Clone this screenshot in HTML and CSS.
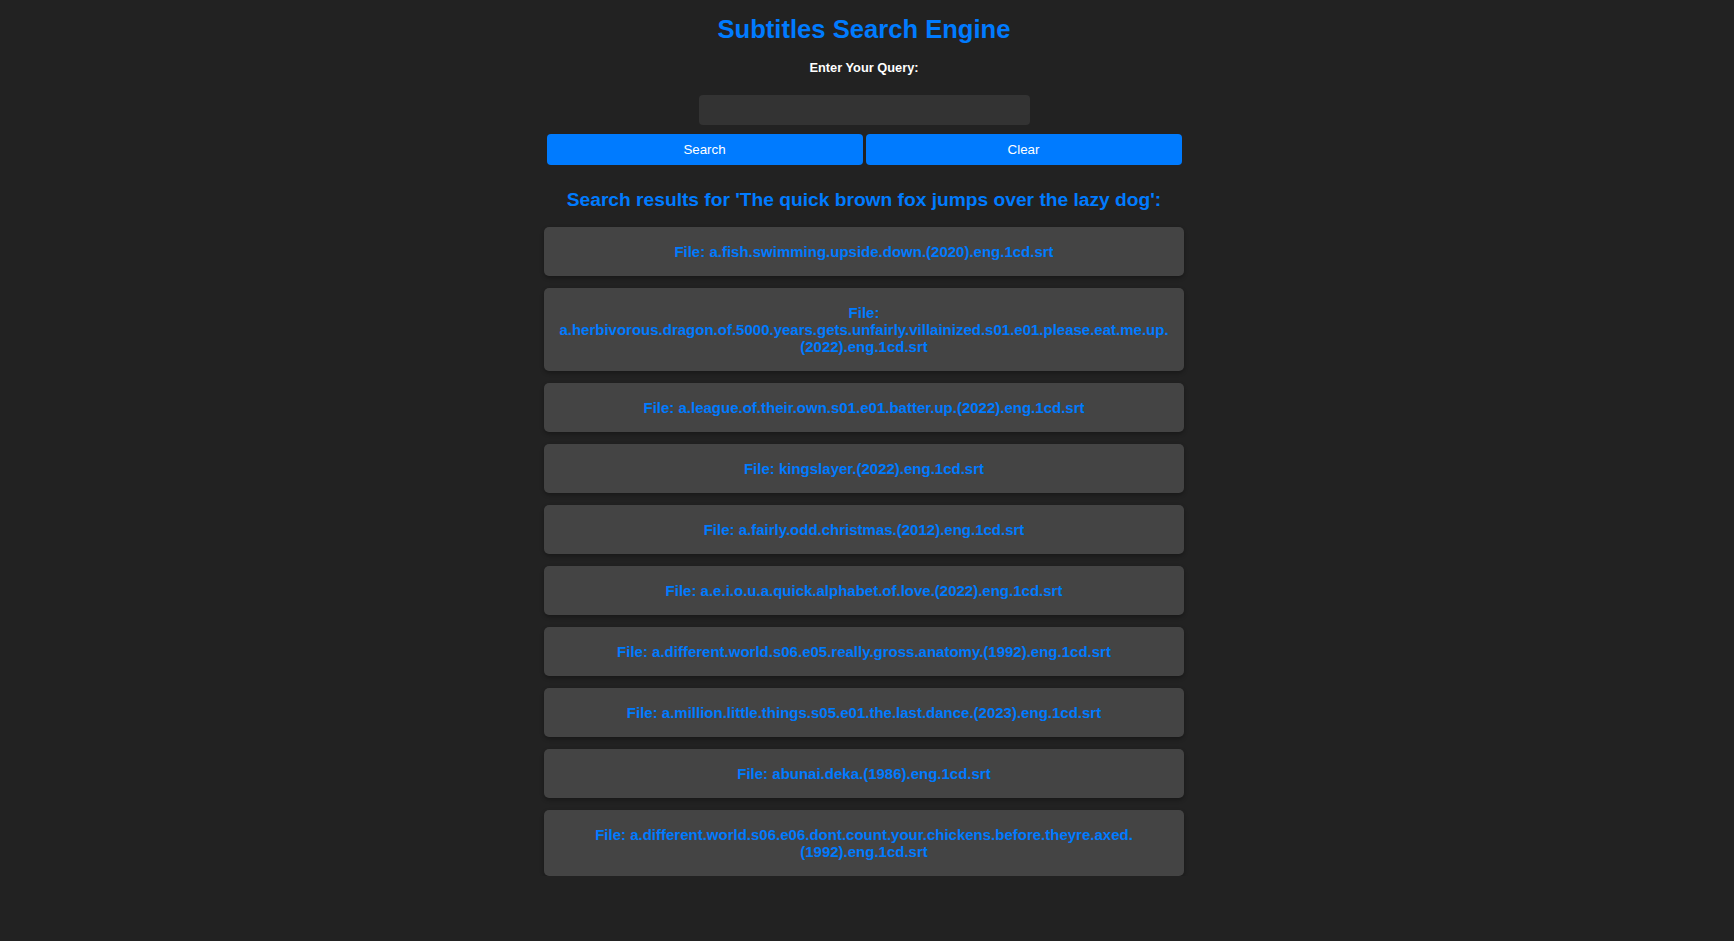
FILE: index.html
```html
<!DOCTYPE html>
<html lang="en">
<head>
<meta charset="utf-8">
<title>Subtitles Search Engine</title>
<link rel="stylesheet" href="styles.css">
</head>
<body>
<div class="app">
  <h1 class="title">Subtitles Search Engine</h1>
  <form class="search-form">
    <label class="query-label" for="query">Enter Your Query:</label>
    <input id="query" class="query-input" type="text">
    <div class="button-row">
      <button type="button" class="btn">Search</button>
      <button type="button" class="btn">Clear</button>
    </div>
  </form>
  <h2 class="results-title">Search results for 'The quick brown fox jumps over the lazy dog':</h2>
  <ul class="results">
    <li class="result">File: a.fish.swimming.upside.down.(2020).eng.1cd.srt</li>
    <li class="result">File: a.herbivorous.dragon.of.5000.years.gets.unfairly.villainized.s01.e01.please.eat.me.up.(2022).eng.1cd.srt</li>
    <li class="result">File: a.league.of.their.own.s01.e01.batter.up.(2022).eng.1cd.srt</li>
    <li class="result">File: kingslayer.(2022).eng.1cd.srt</li>
    <li class="result">File: a.fairly.odd.christmas.(2012).eng.1cd.srt</li>
    <li class="result">File: a.e.i.o.u.a.quick.alphabet.of.love.(2022).eng.1cd.srt</li>
    <li class="result">File: a.different.world.s06.e05.really.gross.anatomy.(1992).eng.1cd.srt</li>
    <li class="result">File: a.million.little.things.s05.e01.the.last.dance.(2023).eng.1cd.srt</li>
    <li class="result">File: abunai.deka.(1986).eng.1cd.srt</li>
    <li class="result">File: a.different.world.s06.e06.dont.count.your.chickens.before.theyre.axed.(1992).eng.1cd.srt</li>
  </ul>
</div>
</body>
</html>
```

FILE: styles.css
```css
html {
  background: #222222;
}

body {
  margin: 0;
  padding: 0 6px 0 0;
  background: #222222;
  font-family: "Liberation Sans", Arial, sans-serif;
}

.app {
  width: 640px;
  margin: 0 auto;
  display: flex;
  flex-direction: column;
  align-items: center;
}

.title {
  margin: 15px 0 0;
  font-size: 25.6px;
  line-height: normal;
  font-weight: bold;
  color: #007bff;
}

.search-form {
  width: 100%;
  display: flex;
  flex-direction: column;
  align-items: center;
}

.query-label {
  display: block;
  margin-top: 16px;
  font-size: 12.8px;
  font-weight: bold;
  color: #ffffff;
}

.query-input {
  box-sizing: border-box;
  margin-top: 20px;
  width: 331px;
  height: 30px;
  padding: 0 8px;
  border: none;
  border-radius: 4px;
  background: #333333;
  color: #ffffff;
  font-family: inherit;
  font-size: 14px;
  outline: none;
}

.button-row {
  margin-top: 9px;
  width: 635px;
  display: flex;
  gap: 3px;
}

.btn {
  flex: 1;
  height: 31px;
  padding: 0;
  border: none;
  border-radius: 4px;
  background: #007bff;
  color: #ffffff;
  font-family: inherit;
  font-size: 13.33px;
  cursor: pointer;
}

.results-title {
  margin: 24px 0 0;
  font-size: 19.2px;
  line-height: normal;
  font-weight: bold;
  color: #007bff;
  text-align: center;
}

.results {
  list-style: none;
  margin: 16px 0 0;
  padding: 0;
  width: 100%;
  display: flex;
  flex-direction: column;
  gap: 12px;
}

.result {
  padding: 16px 15px;
  background: #444444;
  border-radius: 5px;
  box-shadow: 0 2px 4px rgba(0, 0, 0, 0.3);
  color: #007bff;
  font-size: 15px;
  line-height: normal;
  font-weight: bold;
  text-align: center;
}
```
